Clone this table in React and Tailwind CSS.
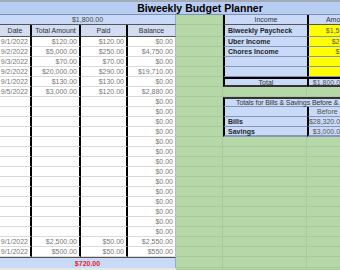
const entries = [
  ['9/1/2022', '$120.00', '$120.00', '$0.00'],
  ['9/2/2022', '$5,000.00', '$250.00', '$4,750.00'],
  ['9/3/2022', '$70.00', '$70.00', '$0.00'],
  ['9/2/2022', '$20,000.00', '$290.00', '$19,710.00'],
  ['9/1/2022', '$130.00', '$130.00', '$0.00'],
  ['9/5/2022', '$3,000.00', '$120.00', '$2,880.00'],
  ...Array.from({ length: 14 }, () => ['', '', '', '$0.00']),
  ['9/1/2022', '$2,500.00', '$50.00', '$2,550.00'],
  ['9/1/2022', '$500.00', '$50.00', '$550.00'],
];

const green = 'bg-[#b6d7a8] border-r border-b border-[#a8cb99]';
const lab = 'bg-[#c9daf8] border-l-2 border-l-black border-b border-b-[#8696b6] flex items-center pl-[3px] font-bold text-[#1f1f1f] whitespace-nowrap';
const amt = 'border-l-2 border-l-black border-b border-b-[#8696b6] flex items-center justify-end whitespace-nowrap text-[#555]';

function RightCells({ r }) {
  if (r === 2)
    return (
      <>
        <div className="bg-[#c9daf8] border-l-2 border-l-black border-b border-b-[#555] flex items-center justify-center text-[#333]">Income</div>
        <div className="bg-[#c9daf8] border-l-2 border-l-black border-b border-b-[#555] flex items-center justify-center text-[#333]">Amount</div>
      </>
    );
  if (r >= 3 && r <= 7) {
    const rows = {
      3: ['Biweekly Paycheck', '$1,500.00'],
      4: ['Uber Income', '$250.00'],
      5: ['Chores Income', '$50.00'],
      6: ['', ''],
      7: ['', ''],
    };
    return (
      <>
        <div className={lab}>{rows[r][0]}</div>
        <div className={`${amt} bg-[#ffff00] pr-[10px]`}>{rows[r][1]}</div>
      </>
    );
  }
  if (r === 8)
    return (
      <>
        <div className="bg-[#c9daf8] border-l-2 border-l-black border-t-2 border-t-black border-b-2 border-b-[#333] flex items-center justify-center text-[#333]">Total</div>
        <div className="bg-[#c9daf8] border-l-2 border-l-black border-t-2 border-t-black border-b-2 border-b-[#333] flex items-center justify-end pr-[23px] text-[#555] whitespace-nowrap">$1,800.00</div>
      </>
    );
  if (r === 10)
    return (
      <div className="col-span-2 bg-[#c9daf8] border-l-2 border-l-black border-t-2 border-t-[#333] border-b border-b-[#8696b6] flex items-center pl-[11px] text-[#333] tracking-[-0.1px] whitespace-nowrap">
        Totals for Bills &amp; Savings Before &amp; After
      </div>
    );
  if (r === 11)
    return (
      <>
        <div className={lab}></div>
        <div className={`${amt} bg-[#c9daf8] !justify-start pl-[8px] text-[#444]`}>Before</div>
      </>
    );
  if (r === 12 || r === 13)
    return (
      <>
        <div className={`${lab} ${r === 13 ? 'border-b-2 border-b-[#333]' : ''}`}>{r === 12 ? 'Bills' : 'Savings'}</div>
        <div className={`${amt} bg-[#c9daf8] pr-[23px] ${r === 13 ? 'border-b-2 border-b-[#333]' : ''}`}>
          {r === 12 ? '$28,320.00' : '$3,000.00'}
        </div>
      </>
    );
  return (
    <>
      <div className={green}></div>
      <div className={green}></div>
    </>
  );
}

export default function App() {
  const cell = 'flex items-center justify-end pr-[2px] border-b border-b-[#dadada] text-[#777] whitespace-nowrap';
  const head = 'bg-[#d2ddf2] flex items-center justify-center border-b border-b-[#555] text-[#333]';

  return (
    <div className="w-[340px] h-[270px] overflow-hidden bg-white font-['Liberation_Sans',Arial,sans-serif]">
      <div className="grid w-[367px] h-[270px] grid-cols-[32px_49px_47px_48px_47px_84px_60px] grid-rows-[15px_10px_12px_repeat(22,10px)_11px_1fr] text-[7px] leading-none">
        {/* Title */}
        <div className="col-span-7 bg-[#b7cdf1] border-t-2 border-t-[#a3abb9] border-b border-b-[#7f8fb0] flex items-center justify-center pl-[33px] font-bold text-[10.5px] text-black">
          Biweekly Budget Planner
        </div>

        {/* Total row */}
        <div className="col-span-4 bg-[#c9daf8] border-b border-b-[#555] border-r border-r-[#9aa8c4] flex items-center justify-center text-[#444]">
          $1,800.00
        </div>
        <div className={green}></div>
        <RightCells r={2} />

        {/* Header */}
        <div className={`${head} border-r-2 border-r-black`}>Date</div>
        <div className={`${head} border-r-2 border-r-black`}>Total Amount</div>
        <div className={`${head} border-r-2 border-r-black`}>Paid</div>
        <div className={`${head} border-r border-r-[#9aa8c4]`}>Balance</div>
        <div className={green}></div>
        <RightCells r={3} />

        {entries.map((e, i) => (
          <div key={i} className="contents">
            <div className={`${cell} border-r-2 border-r-black`}>{e[0]}</div>
            <div className={`${cell} border-r-2 border-r-black`}>{e[1]}</div>
            <div className={`${cell} border-r-2 border-r-black`}>{e[2]}</div>
            <div className={`${cell} border-r border-r-[#b9b9b9]`}>{e[3]}</div>
            <div className={green}></div>
            <RightCells r={i + 4} />
          </div>
        ))}

        {/* Paid total */}
        <div className="col-span-4 bg-[#c9daf8] border-t border-t-[#555] border-r border-r-[#9aa8c4] flex items-center justify-center font-bold text-[#e3262b]">
          $720.00
        </div>
        <div className={green}></div>
        <RightCells r={26} />

        <div className="col-span-4 bg-[#e6e6e6]"></div>
        <div className={green}></div>
        <RightCells r={27} />
      </div>
    </div>
  );
}
